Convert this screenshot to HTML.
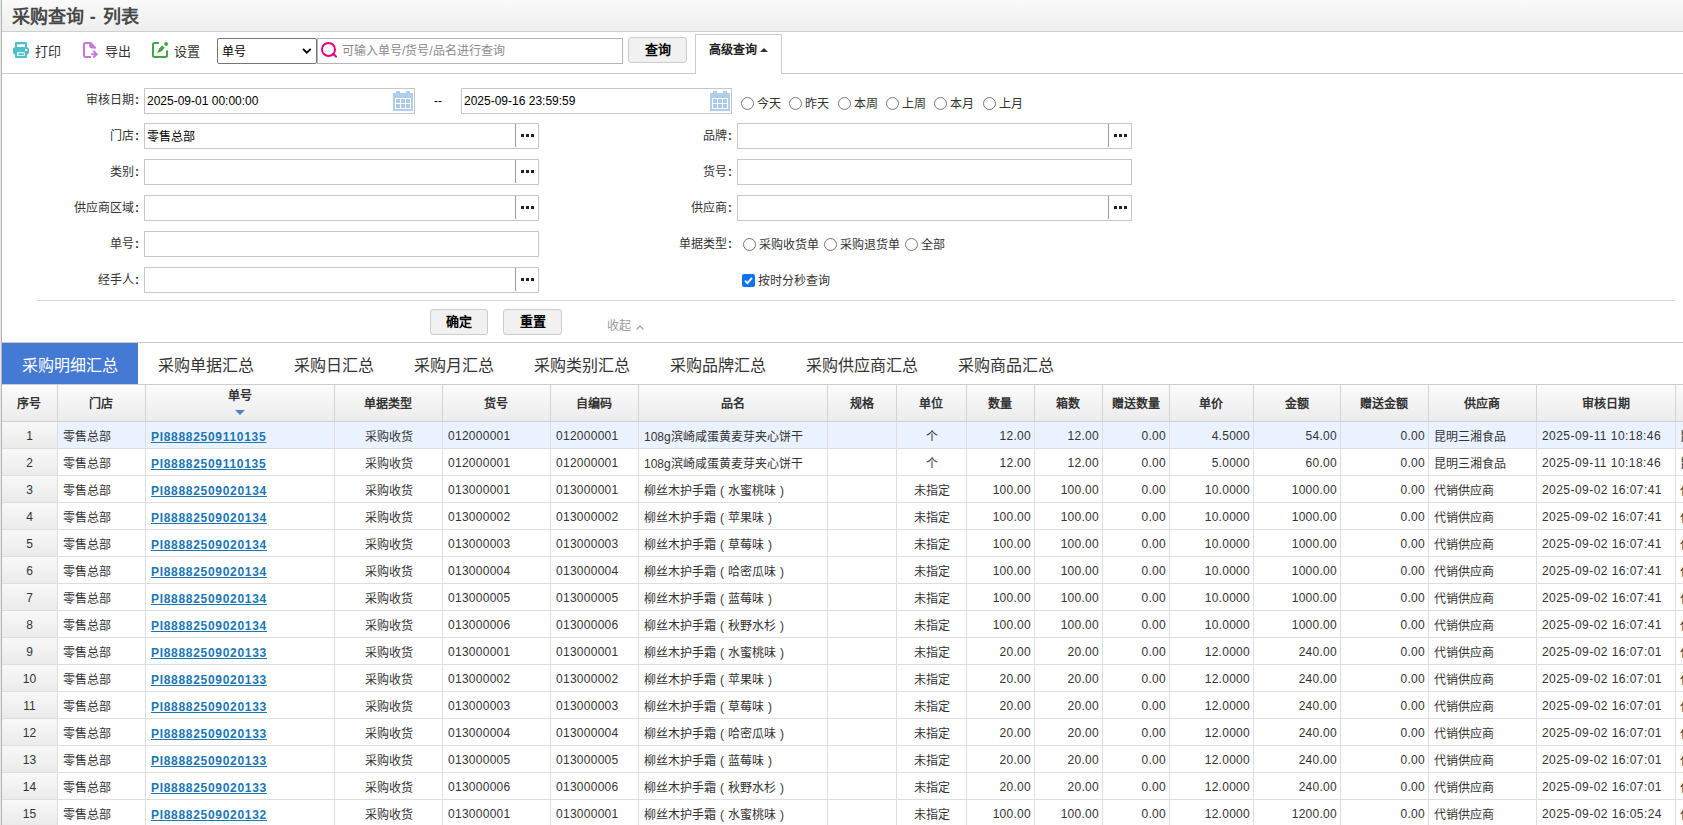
<!DOCTYPE html>
<html lang="zh-CN">
<head>
<meta charset="utf-8">
<title>采购查询 - 列表</title>
<style>
*{box-sizing:border-box}
html,body{margin:0;padding:0}
body{width:1683px;height:825px;overflow:hidden;background:#fff;position:relative;
  font-family:"Liberation Sans",sans-serif;font-size:12px;color:#333;line-height:1}
#edge{position:absolute;left:0;top:0;width:2px;height:825px;background:#b4b4b4;border-left:1px solid #e6e8ee}

/* title bar */
#title{position:absolute;left:2px;top:0;width:1681px;height:32px;border-bottom:1px solid #cfcfcf;
  background:linear-gradient(#fafafa,#eeeeee)}
#title h1{margin:0;position:absolute;left:10px;top:7px;font-size:18px;line-height:20px;font-weight:bold;color:#484848;letter-spacing:0}

#title h1 span{letter-spacing:.85px}

/* toolbar */
#toolbar{position:absolute;left:2px;top:32px;width:1681px;height:42px;border-bottom:1px solid #ccc;background:#fff}
.tbtn{position:absolute;top:10px;height:16px;font-size:13px;line-height:16px;color:#333;white-space:nowrap}
.tbtn svg{position:absolute;left:0;top:0;width:16px;height:16px}
.tbtn span{position:absolute;left:22px;top:2px}
#sel{position:absolute;left:215px;top:6px;width:100px;height:26px;border:1px solid #767676;border-radius:2px;background:#fff;
  font-size:12px;line-height:24px;padding:1px 0 0 4px;color:#000}
#sel svg{position:absolute;right:4px;top:9px;width:9.6px;height:6px}
#kw{position:absolute;left:315px;top:6px;width:306px;height:26px;border:1px solid #b4b4b4;background:#fff}
#kw svg{position:absolute;left:2px;top:2px;width:18px;height:18px}
#kw span{position:absolute;left:24px;top:0;line-height:24px;font-size:12px;color:#8a8a8a;white-space:nowrap}
.btn{position:absolute;height:26px;border:1px solid #ccc;border-radius:3px;background:#f1f1f1;color:#000;
  font-size:13px;font-weight:bold;text-align:center;line-height:24px}
#advtab{position:absolute;left:693px;top:2px;width:87px;height:41px;border:1px solid #ccc;border-bottom:0;background:#fff;
  font-size:12px;font-weight:bold;color:#222;line-height:12px}
#advtab span{position:absolute;left:13px;top:9px;white-space:nowrap}
#advtab i{position:absolute;left:64px;top:13px;width:0;height:0;border-left:4px solid transparent;border-right:4px solid transparent;border-bottom:4px solid #333}

/* form */
#form{position:absolute;left:2px;top:74px;width:1681px;height:268px;background:#fff}
.lb{position:absolute;height:26px;line-height:27px;text-align:right;font-size:12px;color:#333;white-space:nowrap}
.ip{position:absolute;height:26px;border:1px solid #c6c6c6;background:#fff;font-size:12px;line-height:24px;color:#000;padding-left:2px;white-space:nowrap}
.ip .more{position:absolute;right:0;top:0;width:23px;height:23px;border-left:1px solid #9a9a9a}
.ip .more:before{content:"";position:absolute;left:5px;top:10px;width:3px;height:3px;background:#222;box-shadow:5px 0 0 #222,10px 0 0 #222}
.ip .cal{position:absolute;right:1px;top:2px;width:20px;height:20px}
.rd{position:absolute;height:26px;line-height:26px;white-space:nowrap;font-size:12px;color:#333}
.rd i{display:inline-block;width:13px;height:13px;border:1px solid #767676;border-radius:50%;background:#fff;vertical-align:-3px;margin:0 3px 0 5px}
.rd b{font-weight:normal;position:relative;top:1px}
.ck{display:inline-block;width:13px;height:13px;border-radius:2px;background:#0b73f5;vertical-align:-3px;margin:0 3px 0 4px;position:relative}
.ck svg{position:absolute;left:0;top:0;width:13px;height:13px}
#sep1{position:absolute;left:35px;top:226px;width:1638px;height:1px;background:#d4d4d4}
#fold{position:absolute;left:605px;top:245px;font-size:12px;line-height:14px;color:#999;white-space:nowrap}
#fold svg{position:absolute;left:29px;top:6px;width:8px;height:5px}

.lb i{font-style:normal;font-weight:bold;margin-left:1px}

/* tabs */
#tabs{position:absolute;left:2px;top:342px;width:1681px;height:42px;border-top:1px solid #ccc;background:#fff;white-space:nowrap;font-size:16px;line-height:46px;color:#333}
#tabs span{display:inline-block;height:41px;padding:0 20px;vertical-align:top;overflow:hidden}
#tabs span.on{background:#4479d4;color:#fff}

/* grid */
#grid{position:absolute;left:2px;top:384px;width:1681px;height:441px;overflow:hidden;border-top:1px solid #ccc;background:#fff}
#grid table{border-collapse:separate;border-spacing:0;table-layout:fixed;width:1734px;font-size:12px}
#grid th{height:37px;padding:0;border-right:1px solid #d3d3d3;border-bottom:1px solid #d0d0d0;background:linear-gradient(#fbfbfb,#ececec);
  font-weight:bold;color:#333;text-align:center;vertical-align:middle;white-space:nowrap;position:relative;line-height:14px;padding:2px 1px 0 0}
#grid th.sorted .t{position:absolute;left:0;right:0;top:4px}
#grid th.sorted .sort{position:absolute;left:50%;margin-left:-5px;top:25px;width:0;height:0;border-left:5px solid transparent;border-right:5px solid transparent;border-top:5px solid #4b7fd1}
#grid td{height:27px;padding:1px 4px 0 5px;border-right:1px solid #dedede;border-bottom:1px solid #dedede;white-space:nowrap;overflow:hidden;color:#333;line-height:14px;vertical-align:middle}
#grid td.z{padding-top:3px}
#grid td.c{text-align:center}
#grid td.r{text-align:right;padding-right:3px}
#grid td.n{letter-spacing:.27px}
#grid td.d{letter-spacing:.45px}
#grid td.last{padding-left:4px}
#grid td.rn{text-align:center;background:linear-gradient(#f8f8f8,#ebebeb);padding:1px 0 0 0}
#grid tr.sel td{background:#eaf2ff}
#grid tr.sel td.rn{background:linear-gradient(#f8f8f8,#ebebeb)}
#grid a{color:#1a76b5;font-weight:bold;text-decoration:underline;letter-spacing:.7px;position:relative;top:1px}
</style>
</head>
<body>
<div id="edge"></div>

<div id="title"><h1>采购查询<span> - </span>列表</h1></div>

<div id="toolbar">
  <div class="tbtn" style="left:11px;width:50px">
    <svg viewBox="0 0 16 16"><path fill="#4fbfcb" fill-rule="evenodd" d="M3 0h10a1 1 0 0 1 1 1v4.2h.2A1.8 1.8 0 0 1 16 7v3.6a1.8 1.8 0 0 1-1.8 1.8H14V15a1 1 0 0 1-1 1H3a1 1 0 0 1-1-1v-2.6h-.2A1.8 1.8 0 0 1 0 10.6V7a1.8 1.8 0 0 1 1.8-1.8H2V1a1 1 0 0 1 1-1zm1.1 2.3v2.8h7.8V2.3zM12 7.1v2h2.2v-2zM5 10.2a1 1 0 0 0-1 1V13a1 1 0 0 0 1 1h6a1 1 0 0 0 1-1v-1.8a1 1 0 0 0-1-1zm.3 1.1h5.6v1.9H5.3z"/></svg>
    <span>打印</span>
  </div>
  <div class="tbtn" style="left:81px;width:50px;letter-spacing:0">
    <svg viewBox="0 0 16 16"><g fill="none" stroke="#c678dd" stroke-width="2" stroke-linejoin="round" stroke-linecap="butt"><path d="M8 15H2.2A1.2 1.2 0 0 1 1 13.8V2.2A1.2 1.2 0 0 1 2.2 1h5.4l5 5.2"/><path d="M8.2 12.2h5.2"/><path d="M10.4 8.9l3.3 3.3-3.3 3.3" stroke-linejoin="miter"/></g><path fill="#c678dd" d="M6.2 1.4h1.6l5 5H8a1.8 1.8 0 0 1-1.8-1.8z"/></svg>
    <span>导出</span>
  </div>
  <div class="tbtn" style="left:150px;width:50px">
    <svg viewBox="0 0 16 16"><path fill="none" stroke="#3fa845" stroke-width="2" d="M6.9 1H2.5A1.5 1.5 0 0 0 1 2.5v11A1.5 1.5 0 0 0 2.5 15h11a1.5 1.5 0 0 0 1.5-1.5V8.4"/><path fill="#3fa845" d="M5.1 11.2l2.2-5 3.1-2.7 2.3 2.3-3.1 3.5z"/><circle cx="14.1" cy="2" r="1.9" fill="#3fa845"/></svg>
    <span>设置</span>
  </div>
  <div id="sel">单号<svg viewBox="0 0 9.6 6"><path d="M.9 .9L4.8 4.7 8.7 .9" fill="none" stroke="#000" stroke-width="1.8"/></svg></div>
  <div id="kw"><svg viewBox="0 0 18 18"><circle cx="8.5" cy="8.4" r="6.5" fill="none" stroke="#e6007a" stroke-width="2"/><path d="M13.3 13.2L16 15.5" stroke="#e6007a" stroke-width="2.2" stroke-linecap="round"/></svg><span>可输入单号/货号/品名进行查询</span></div>
  <div class="btn" style="left:626px;top:5px;width:59px">查询</div>
  <div id="advtab"><span>高级查询</span><i></i></div>
</div>

<div id="form">
  <!-- row 1 -->
  <div class="lb" style="left:37px;top:14px;width:100px;line-height:24px">审核日期<i>:</i></div>
  <div class="ip" style="left:142px;top:14px;width:271px">2025-09-01 00:00:00<svg class="cal" viewBox="0 0 20 20"><path fill="#afd0ec" d="M3 0h4v2h6V0h4v2h3v18H0V2h3z"/><path fill="#fff" d="M2 7h16v11H2z"/><path fill="#adc9e5" d="M3 8h4v4H3zm5 0h4v4H8zm5 0h4v4h-4zM3 13h4v4H3zm5 0h4v4H8zm5 0h4v4h-4z"/></svg></div>
  <div class="lb" style="left:432px;top:14px;width:10px;text-align:left;color:#000;line-height:26px">--</div>
  <div class="ip" style="left:459px;top:14px;width:271px">2025-09-16 23:59:59<svg class="cal" viewBox="0 0 20 20"><path fill="#afd0ec" d="M3 0h4v2h6V0h4v2h3v18H0V2h3z"/><path fill="#fff" d="M2 7h16v11H2z"/><path fill="#adc9e5" d="M3 8h4v4H3zm5 0h4v4H8zm5 0h4v4h-4zM3 13h4v4H3zm5 0h4v4H8zm5 0h4v4h-4z"/></svg></div>
  <div class="rd" style="left:734px;top:16px"><i></i><b>今天</b> <i></i><b>昨天</b> <i></i><b>本周</b> <i></i><b>上周</b> <i></i><b>本月</b> <i></i><b>上月</b></div>

  <!-- row 2 -->
  <div class="lb" style="left:37px;top:49px;width:100px">门店<i>:</i></div>
  <div class="ip" style="left:142px;top:49px;width:395px;line-height:26px">零售总部<span class="more"></span></div>
  <div class="lb" style="left:630px;top:49px;width:100px">品牌<i>:</i></div>
  <div class="ip" style="left:735px;top:49px;width:395px"><span class="more"></span></div>

  <!-- row 3 -->
  <div class="lb" style="left:37px;top:85px;width:100px">类别<i>:</i></div>
  <div class="ip" style="left:142px;top:85px;width:395px"><span class="more"></span></div>
  <div class="lb" style="left:630px;top:85px;width:100px">货号<i>:</i></div>
  <div class="ip" style="left:735px;top:85px;width:395px"></div>

  <!-- row 4 -->
  <div class="lb" style="left:37px;top:121px;width:100px">供应商区域<i>:</i></div>
  <div class="ip" style="left:142px;top:121px;width:395px"><span class="more"></span></div>
  <div class="lb" style="left:630px;top:121px;width:100px">供应商<i>:</i></div>
  <div class="ip" style="left:735px;top:121px;width:395px"><span class="more"></span></div>

  <!-- row 5 -->
  <div class="lb" style="left:37px;top:157px;width:100px">单号<i>:</i></div>
  <div class="ip" style="left:142px;top:157px;width:395px"></div>
  <div class="lb" style="left:630px;top:157px;width:100px">单据类型<i>:</i></div>
  <div class="rd" style="left:736px;top:157px"><i></i><b>采购收货单</b><i></i><b>采购退货单</b><i></i><b>全部</b></div>

  <!-- row 6 -->
  <div class="lb" style="left:37px;top:193px;width:100px">经手人<i>:</i></div>
  <div class="ip" style="left:142px;top:193px;width:395px"><span class="more"></span></div>
  <div class="rd" style="left:736px;top:193px"><span class="ck"><svg viewBox="0 0 13 13"><path d="M3 6.6l2.4 2.5L10 3.9" fill="none" stroke="#fff" stroke-width="1.9"/></svg></span><b>按时分秒查询</b></div>

  <div id="sep1"></div>
  <div class="btn" style="left:428px;top:235px;width:58px">确定</div>
  <div class="btn" style="left:501px;top:235px;width:59px">重置</div>
  <div id="fold">收起<svg viewBox="0 0 8 5"><path d="M.5 4.5L4 1l3.5 3.5" fill="none" stroke="#999" stroke-width="1.1"/></svg></div>
</div>

<div id="tabs"><span class="on">采购明细汇总</span><span>采购单据汇总</span><span>采购日汇总</span><span>采购月汇总</span><span>采购类别汇总</span><span>采购品牌汇总</span><span>采购供应商汇总</span><span>采购商品汇总</span></div>

<div id="grid">
<table>
<colgroup><col style="width:56px"><col style="width:88px"><col style="width:189px"><col style="width:108px"><col style="width:108px"><col style="width:88px"><col style="width:189px"><col style="width:69px"><col style="width:70px"><col style="width:68px"><col style="width:68px"><col style="width:67px"><col style="width:84px"><col style="width:87px"><col style="width:88px"><col style="width:108px"><col style="width:139px"><col style="width:60px"></colgroup>
<thead><tr><th>序号</th><th>门店</th><th class="sorted"><span class="t">单号</span><span class="sort"></span></th><th>单据类型</th><th>货号</th><th>自编码</th><th>品名</th><th>规格</th><th>单位</th><th>数量</th><th>箱数</th><th>赠送数量</th><th>单价</th><th>金额</th><th>赠送金额</th><th>供应商</th><th>审核日期</th><th></th></tr></thead>
<tbody>
<tr class="sel"><td class="rn">1</td><td class="l z">零售总部</td><td class="l lk"><a>PI88882509110135</a></td><td class="c z">采购收货</td><td class="l n">012000001</td><td class="l n">012000001</td><td class="l z">108g滨崎咸蛋黄麦芽夹心饼干</td><td class="l z"></td><td class="c z">个</td><td class="r n">12.00</td><td class="r n">12.00</td><td class="r n">0.00</td><td class="r n">4.5000</td><td class="r n">54.00</td><td class="r n">0.00</td><td class="l z">昆明三湘食品</td><td class="l d">2025-09-11 10:18:46</td><td class="l last z">昆明三湘食品</td></tr>
<tr><td class="rn">2</td><td class="l z">零售总部</td><td class="l lk"><a>PI88882509110135</a></td><td class="c z">采购收货</td><td class="l n">012000001</td><td class="l n">012000001</td><td class="l z">108g滨崎咸蛋黄麦芽夹心饼干</td><td class="l z"></td><td class="c z">个</td><td class="r n">12.00</td><td class="r n">12.00</td><td class="r n">0.00</td><td class="r n">5.0000</td><td class="r n">60.00</td><td class="r n">0.00</td><td class="l z">昆明三湘食品</td><td class="l d">2025-09-11 10:18:46</td><td class="l last z">昆明三湘食品</td></tr>
<tr><td class="rn">3</td><td class="l z">零售总部</td><td class="l lk"><a>PI88882509020134</a></td><td class="c z">采购收货</td><td class="l n">013000001</td><td class="l n">013000001</td><td class="l z">柳丝木护手霜 ( 水蜜桃味 )</td><td class="l z"></td><td class="c z">未指定</td><td class="r n">100.00</td><td class="r n">100.00</td><td class="r n">0.00</td><td class="r n">10.0000</td><td class="r n">1000.00</td><td class="r n">0.00</td><td class="l z">代销供应商</td><td class="l d">2025-09-02 16:07:41</td><td class="l last z">代销供应商</td></tr>
<tr><td class="rn">4</td><td class="l z">零售总部</td><td class="l lk"><a>PI88882509020134</a></td><td class="c z">采购收货</td><td class="l n">013000002</td><td class="l n">013000002</td><td class="l z">柳丝木护手霜 ( 苹果味 )</td><td class="l z"></td><td class="c z">未指定</td><td class="r n">100.00</td><td class="r n">100.00</td><td class="r n">0.00</td><td class="r n">10.0000</td><td class="r n">1000.00</td><td class="r n">0.00</td><td class="l z">代销供应商</td><td class="l d">2025-09-02 16:07:41</td><td class="l last z">代销供应商</td></tr>
<tr><td class="rn">5</td><td class="l z">零售总部</td><td class="l lk"><a>PI88882509020134</a></td><td class="c z">采购收货</td><td class="l n">013000003</td><td class="l n">013000003</td><td class="l z">柳丝木护手霜 ( 草莓味 )</td><td class="l z"></td><td class="c z">未指定</td><td class="r n">100.00</td><td class="r n">100.00</td><td class="r n">0.00</td><td class="r n">10.0000</td><td class="r n">1000.00</td><td class="r n">0.00</td><td class="l z">代销供应商</td><td class="l d">2025-09-02 16:07:41</td><td class="l last z">代销供应商</td></tr>
<tr><td class="rn">6</td><td class="l z">零售总部</td><td class="l lk"><a>PI88882509020134</a></td><td class="c z">采购收货</td><td class="l n">013000004</td><td class="l n">013000004</td><td class="l z">柳丝木护手霜 ( 哈密瓜味 )</td><td class="l z"></td><td class="c z">未指定</td><td class="r n">100.00</td><td class="r n">100.00</td><td class="r n">0.00</td><td class="r n">10.0000</td><td class="r n">1000.00</td><td class="r n">0.00</td><td class="l z">代销供应商</td><td class="l d">2025-09-02 16:07:41</td><td class="l last z">代销供应商</td></tr>
<tr><td class="rn">7</td><td class="l z">零售总部</td><td class="l lk"><a>PI88882509020134</a></td><td class="c z">采购收货</td><td class="l n">013000005</td><td class="l n">013000005</td><td class="l z">柳丝木护手霜 ( 蓝莓味 )</td><td class="l z"></td><td class="c z">未指定</td><td class="r n">100.00</td><td class="r n">100.00</td><td class="r n">0.00</td><td class="r n">10.0000</td><td class="r n">1000.00</td><td class="r n">0.00</td><td class="l z">代销供应商</td><td class="l d">2025-09-02 16:07:41</td><td class="l last z">代销供应商</td></tr>
<tr><td class="rn">8</td><td class="l z">零售总部</td><td class="l lk"><a>PI88882509020134</a></td><td class="c z">采购收货</td><td class="l n">013000006</td><td class="l n">013000006</td><td class="l z">柳丝木护手霜 ( 秋野水杉 )</td><td class="l z"></td><td class="c z">未指定</td><td class="r n">100.00</td><td class="r n">100.00</td><td class="r n">0.00</td><td class="r n">10.0000</td><td class="r n">1000.00</td><td class="r n">0.00</td><td class="l z">代销供应商</td><td class="l d">2025-09-02 16:07:41</td><td class="l last z">代销供应商</td></tr>
<tr><td class="rn">9</td><td class="l z">零售总部</td><td class="l lk"><a>PI88882509020133</a></td><td class="c z">采购收货</td><td class="l n">013000001</td><td class="l n">013000001</td><td class="l z">柳丝木护手霜 ( 水蜜桃味 )</td><td class="l z"></td><td class="c z">未指定</td><td class="r n">20.00</td><td class="r n">20.00</td><td class="r n">0.00</td><td class="r n">12.0000</td><td class="r n">240.00</td><td class="r n">0.00</td><td class="l z">代销供应商</td><td class="l d">2025-09-02 16:07:01</td><td class="l last z">代销供应商</td></tr>
<tr><td class="rn">10</td><td class="l z">零售总部</td><td class="l lk"><a>PI88882509020133</a></td><td class="c z">采购收货</td><td class="l n">013000002</td><td class="l n">013000002</td><td class="l z">柳丝木护手霜 ( 苹果味 )</td><td class="l z"></td><td class="c z">未指定</td><td class="r n">20.00</td><td class="r n">20.00</td><td class="r n">0.00</td><td class="r n">12.0000</td><td class="r n">240.00</td><td class="r n">0.00</td><td class="l z">代销供应商</td><td class="l d">2025-09-02 16:07:01</td><td class="l last z">代销供应商</td></tr>
<tr><td class="rn">11</td><td class="l z">零售总部</td><td class="l lk"><a>PI88882509020133</a></td><td class="c z">采购收货</td><td class="l n">013000003</td><td class="l n">013000003</td><td class="l z">柳丝木护手霜 ( 草莓味 )</td><td class="l z"></td><td class="c z">未指定</td><td class="r n">20.00</td><td class="r n">20.00</td><td class="r n">0.00</td><td class="r n">12.0000</td><td class="r n">240.00</td><td class="r n">0.00</td><td class="l z">代销供应商</td><td class="l d">2025-09-02 16:07:01</td><td class="l last z">代销供应商</td></tr>
<tr><td class="rn">12</td><td class="l z">零售总部</td><td class="l lk"><a>PI88882509020133</a></td><td class="c z">采购收货</td><td class="l n">013000004</td><td class="l n">013000004</td><td class="l z">柳丝木护手霜 ( 哈密瓜味 )</td><td class="l z"></td><td class="c z">未指定</td><td class="r n">20.00</td><td class="r n">20.00</td><td class="r n">0.00</td><td class="r n">12.0000</td><td class="r n">240.00</td><td class="r n">0.00</td><td class="l z">代销供应商</td><td class="l d">2025-09-02 16:07:01</td><td class="l last z">代销供应商</td></tr>
<tr><td class="rn">13</td><td class="l z">零售总部</td><td class="l lk"><a>PI88882509020133</a></td><td class="c z">采购收货</td><td class="l n">013000005</td><td class="l n">013000005</td><td class="l z">柳丝木护手霜 ( 蓝莓味 )</td><td class="l z"></td><td class="c z">未指定</td><td class="r n">20.00</td><td class="r n">20.00</td><td class="r n">0.00</td><td class="r n">12.0000</td><td class="r n">240.00</td><td class="r n">0.00</td><td class="l z">代销供应商</td><td class="l d">2025-09-02 16:07:01</td><td class="l last z">代销供应商</td></tr>
<tr><td class="rn">14</td><td class="l z">零售总部</td><td class="l lk"><a>PI88882509020133</a></td><td class="c z">采购收货</td><td class="l n">013000006</td><td class="l n">013000006</td><td class="l z">柳丝木护手霜 ( 秋野水杉 )</td><td class="l z"></td><td class="c z">未指定</td><td class="r n">20.00</td><td class="r n">20.00</td><td class="r n">0.00</td><td class="r n">12.0000</td><td class="r n">240.00</td><td class="r n">0.00</td><td class="l z">代销供应商</td><td class="l d">2025-09-02 16:07:01</td><td class="l last z">代销供应商</td></tr>
<tr><td class="rn">15</td><td class="l z">零售总部</td><td class="l lk"><a>PI88882509020132</a></td><td class="c z">采购收货</td><td class="l n">013000001</td><td class="l n">013000001</td><td class="l z">柳丝木护手霜 ( 水蜜桃味 )</td><td class="l z"></td><td class="c z">未指定</td><td class="r n">100.00</td><td class="r n">100.00</td><td class="r n">0.00</td><td class="r n">12.0000</td><td class="r n">1200.00</td><td class="r n">0.00</td><td class="l z">代销供应商</td><td class="l d">2025-09-02 16:05:24</td><td class="l last z">代销供应商</td></tr>
</tbody>
</table>
</div>
</body>
</html>
